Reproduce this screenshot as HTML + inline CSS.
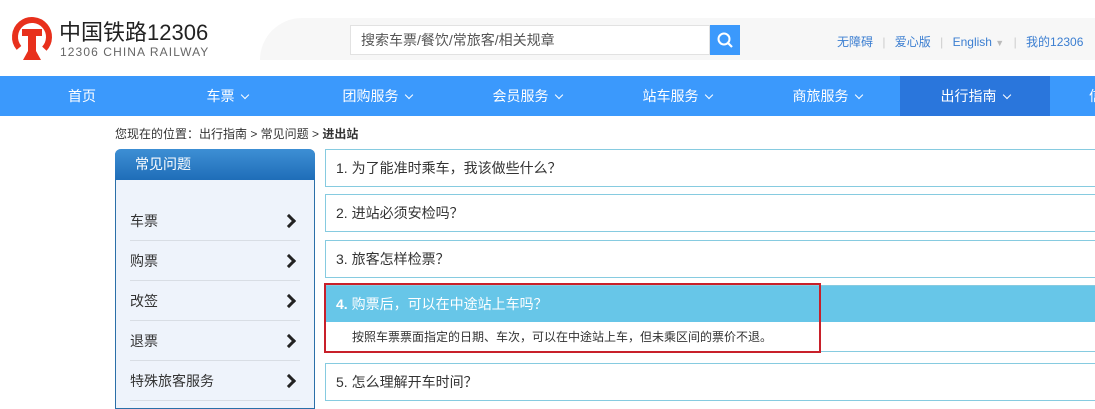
<!DOCTYPE html>
<html><head><meta charset="utf-8"><style>
*{margin:0;padding:0;box-sizing:border-box}
body{width:1095px;height:401px;overflow:hidden;background:#fff;font-family:"Liberation Sans","Noto Sans CJK SC",sans-serif;position:relative}
.a{position:absolute}
.nav{top:76px;left:0;width:1095px;height:40px;background:#3b99fc}
.nav div{position:absolute;top:0;height:40px;line-height:40px;color:#fff;font-size:14px;text-align:center;width:150px}
.chev{display:inline-block;width:6px;height:6px;border-right:1.5px solid #fff;border-bottom:1.5px solid #fff;transform:rotate(45deg);margin-left:7px;position:relative;top:-3px}
.q{position:absolute;left:325px;width:780px;border:1px solid #86cbe0;height:38px;line-height:36px;font-size:14px;color:#333;padding-left:10px}
.side{left:115px;top:149px;width:200px;height:260px;background:#eef3fb;border:1px solid #2a6fa8;border-top:none;border-radius:6px 6px 0 0}
.sh{left:115px;top:149px;width:200px;height:31px;background:linear-gradient(#3d8fd4,#1f6db8);border-radius:6px 6px 0 0;color:#fff;font-size:14px;line-height:31px;padding-left:20px}
.it{position:absolute;left:130px;width:170px;height:40px;line-height:40px;font-size:14px;color:#333;border-bottom:1px solid #d8dde4}
.it:after{content:"";position:absolute;right:6px;top:15px;width:7px;height:7px;border-right:3px solid #222;border-top:3px solid #222;transform:rotate(45deg)}
</style></head><body>
<div class="a" style="left:260px;top:18px;width:835px;height:42px;background:#f7f7f7;border-radius:60px 0 0 0"></div>
<svg class="a" style="left:9px;top:11px" width="46" height="50" viewBox="0 0 46 50"><circle cx="23" cy="26" r="17" fill="none" stroke="#e8301c" stroke-width="6" stroke-dasharray="78 29" transform="rotate(140 23 26)"/><path d="M13 18 H33 V25 H27 V40 L32 49 H14 L19 40 V25 H13 Z" fill="#e8301c"/></svg>
<div class="a" style="left:59px;top:15px;font-size:22px;color:#222">中国铁路12306</div>
<div class="a" style="left:60px;top:45px;font-size:12px;color:#666;letter-spacing:1.1px">12306 CHINA RAILWAY</div>
<div class="a" style="left:350px;top:25px;width:360px;height:30px;background:#fff;border:1px solid #e2e2e2;font-size:14px;color:#555;line-height:28px;padding-left:10px">搜索车票/餐饮/常旅客/相关规章</div>
<div class="a" style="left:710px;top:25px;width:30px;height:30px;background:#3b99fc"><svg width="30" height="30"><circle cx="14" cy="14" r="5.5" fill="none" stroke="#fff" stroke-width="2"/><path d="M18 18 L22 22" stroke="#fff" stroke-width="2.2"/></svg></div>
<div class="a" style="left:837px;top:33px;font-size:12px;color:#3b7ed1;white-space:nowrap">无障碍 <span style="color:#ccc;margin:0 6px">|</span> 爱心版 <span style="color:#ccc;margin:0 6px">|</span> English <span style="color:#bbb;font-size:9px">▼</span> <span style="color:#ccc;margin:0 6px">|</span> 我的12306</div>
<div class="a nav">
<div style="left:7px">首页</div>
<div style="left:152px">车票<span class="chev"></span></div>
<div style="left:302px">团购服务<span class="chev"></span></div>
<div style="left:452px">会员服务<span class="chev"></span></div>
<div style="left:602px">站车服务<span class="chev"></span></div>
<div style="left:752px">商旅服务<span class="chev"></span></div>
<div style="left:900px;background:#2a76dc">出行指南<span class="chev"></span></div>
<div style="left:1070px;width:40px;text-align:left;padding-left:19px">信</div>
</div>
<div class="a" style="left:115px;top:125px;font-size:12px;color:#333">您现在的位置：出行指南 &gt; 常见问题 &gt; <b>进出站</b></div>
<div class="a side"></div>
<div class="a sh">常见问题</div>
<div class="it" style="top:201px">车票</div>
<div class="it" style="top:241px">购票</div>
<div class="it" style="top:281px">改签</div>
<div class="it" style="top:321px">退票</div>
<div class="it" style="top:361px">特殊旅客服务</div>
<div class="q" style="top:149px">1. 为了能准时乘车，我该做些什么？</div>
<div class="q" style="top:194px">2. 进站必须安检吗？</div>
<div class="q" style="top:240px">3. 旅客怎样检票？</div>
<div class="q" style="top:285px;height:67px;padding:0;border-color:#86cbe0">
<div style="background:#67c6e8;height:36px;line-height:36px;color:#fff;padding-left:10px"><b>4.</b> 购票后，可以在中途站上车吗？</div>
<div style="font-size:12px;line-height:30px;padding-left:26px;color:#333">按照车票票面指定的日期、车次，可以在中途站上车，但未乘区间的票价不退。</div>
</div>
<div class="a" style="left:324px;top:283px;width:497px;height:70px;border:2px solid #c8202a"></div>
<div class="q" style="top:363px">5. 怎么理解开车时间？</div>
</body></html>
